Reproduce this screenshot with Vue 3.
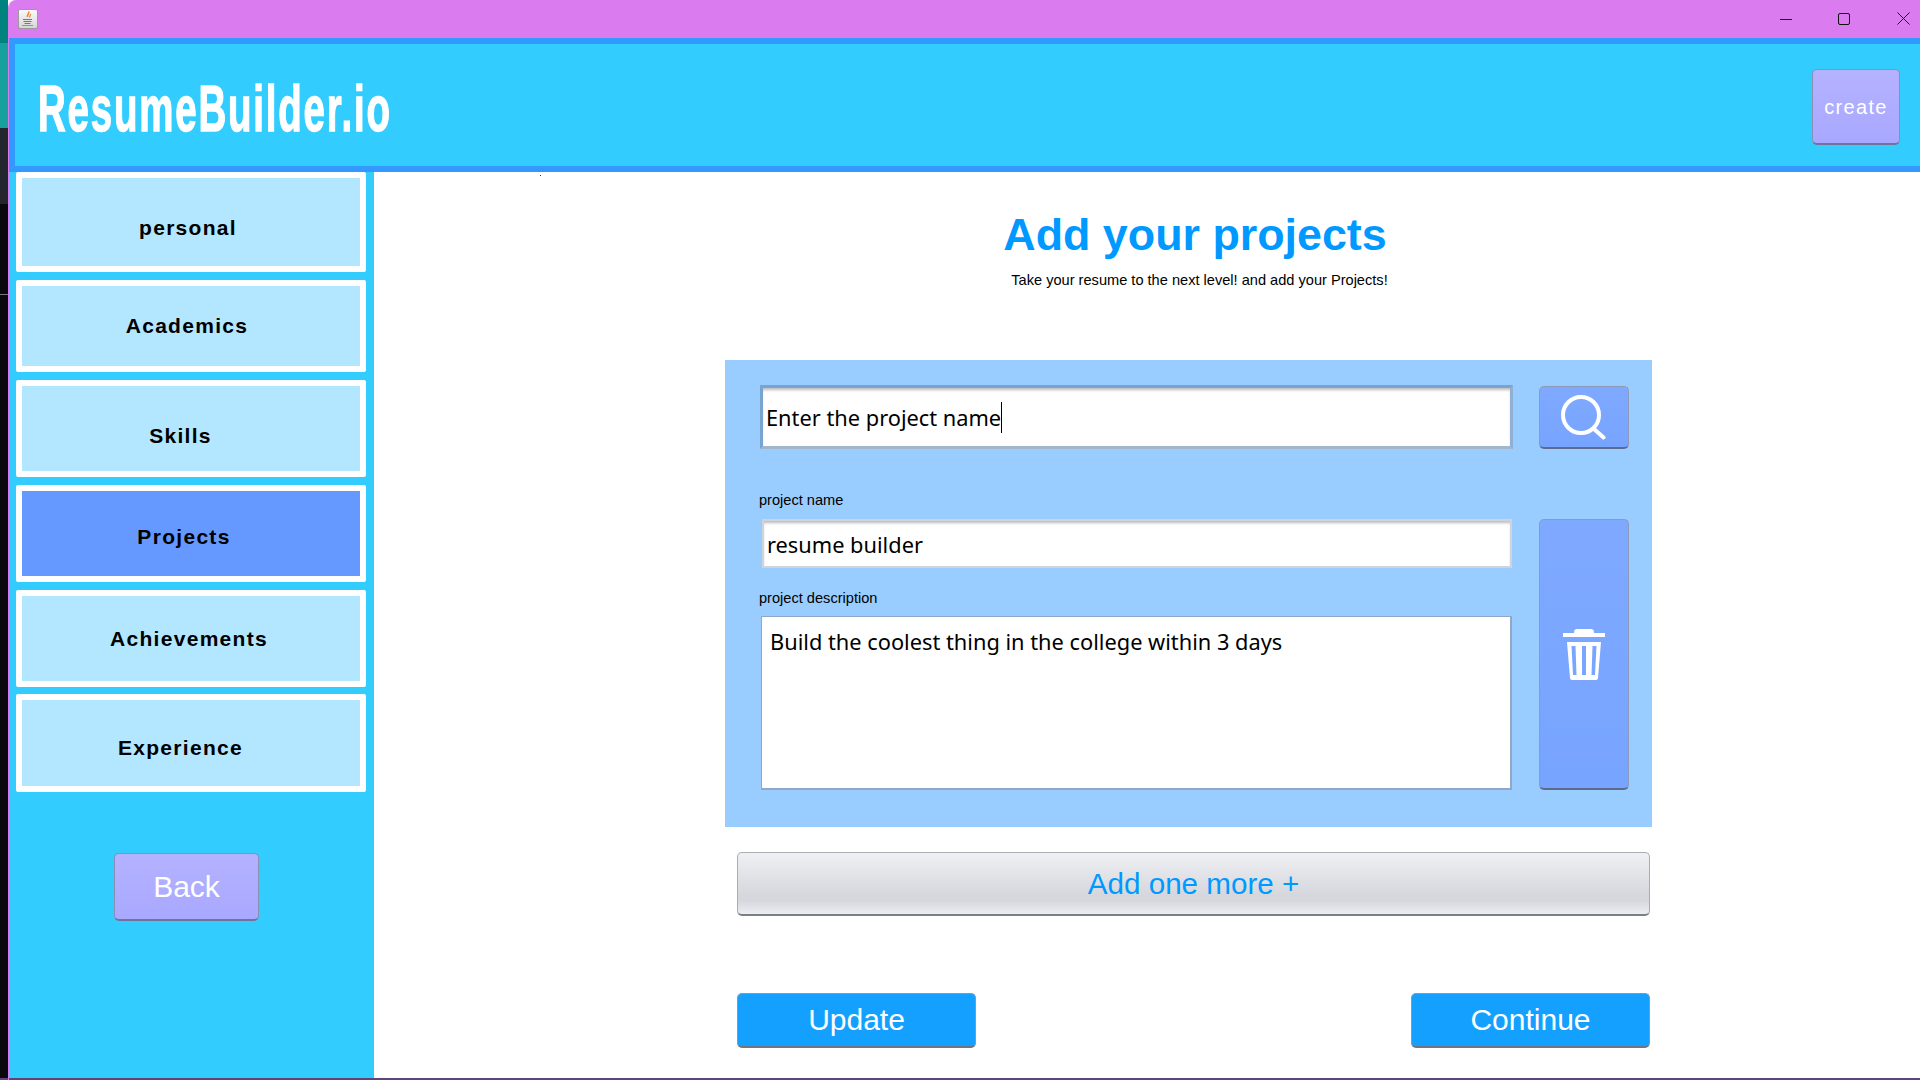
<script setup>
const navItems = [
  { label: 'personal', cls: 'n1' },
  { label: 'Academics', cls: 'n2' },
  { label: 'Skills', cls: 'n3' },
  { label: 'Projects', cls: 'n4 active' },
  { label: 'Achievements', cls: 'n5' },
  { label: 'Experience', cls: 'n6' }
]
</script>

<template>
  <div class="screen">
    <div class="desktop">
      <div class="d1"></div><div class="d2"></div><div class="d3"></div><div class="d4"></div><div class="d5"></div><div class="d6"></div><div class="d7"></div>
    </div>
    <div class="window">
      <div class="titlebar">
        <div class="appicon">
          <svg width="20" height="20" viewBox="0 0 20 20">
            <path d="M10.5 2.500c1.500 2-2 3-1 5.500" fill="none" stroke="#e8873a" stroke-width="1.6"/>
            <path d="M12.500 5c.5 1.500-1.500 2-.8 3.500" fill="none" stroke="#e8873a" stroke-width="1.2"/>
            <path d="M5 10.500h9M5.500 12.500h8M6.500 14.500h6" stroke="#5d7f9e" stroke-width="1.1" fill="none"/>
            <path d="M4 16.500h11" stroke="#7f99b3" stroke-width="1.1" fill="none"/>
          </svg>
        </div>
        <div class="winbtns">
          <svg class="w1" width="12" height="12" viewBox="0 0 12 12"><path d="M0 6.500h12" stroke="#111" fill="none"/></svg>
          <svg class="w2" width="12" height="12" viewBox="0 0 12 12"><rect x=".5" y=".5" width="11" height="11" rx="1.500" stroke="#111" fill="none"/></svg>
          <svg class="w3" width="13" height="13" viewBox="0 0 13 13"><path d="M.5.5l12 12M12.500.5l-12 12" stroke="#111" fill="none"/></svg>
        </div>
      </div>
      <header class="header">
        <div class="logo">ResumeBuilder.io</div>
        <button class="create">create</button>
      </header>
      <div class="body">
        <aside class="sidebar">
          <div v-for="n in navItems" :key="n.label" class="nav" :class="n.cls"><span>{{ n.label }}</span></div>
          <button class="back">Back</button>
        </aside>
        <main class="main">
          <i class="speck"></i>
          <h1 class="title">Add your projects</h1>
          <p class="sub">Take your resume to the next level! and add your Projects!</p>
          <section class="panel">
            <div class="left">
              <div class="field search"><span class="caretwrap">Enter the project name</span></div>
              <label class="lab l1">project name</label>
              <div class="field name">resume builder</div>
              <label class="lab l2">project description</label>
              <div class="area">Build the coolest thing in the college within 3 days</div>
            </div>
            <div class="right">
              <button class="icon sbtn">
                <svg width="46" height="46" viewBox="0 0 46 46"><circle cx="20" cy="21" r="18" fill="none" stroke="#fff" stroke-width="4"/><path d="M33 35l9.500 8.500" stroke="#fff" stroke-width="4" stroke-linecap="round" fill="none"/></svg>
              </button>
              <button class="icon dbtn">
                <svg width="42" height="51" viewBox="0 0 42 51">
                  <path d="M11 4c0-3 1-4 3-4h14c2 0 3 1 3 4z" fill="#fff"/>
                  <rect x="0" y="4" width="42" height="4" fill="#fff"/>
                  <path d="M4 13h34l-3 36c0 1-1 2-2 2H9c-1 0-2-1-2-2z" fill="#fff"/>
                  <path d="M8.500 17h4l1 29h-3.500zM19 17h4v29h-4zM29.500 17h4l-1.500 29h-3.500z" fill="#7aa6ff"/>
                </svg>
              </button>
            </div>
          </section>
          <button class="more">Add one more +</button>
          <div class="actions">
            <button class="act">Update</button>
            <button class="act">Continue</button>
          </div>
        </main>
      </div>
      <div class="bottomline"></div>
    </div>
  </div>
</template>

<style>
html, body { margin: 0; background: #fff; overflow: hidden; }
</style>

<style scoped>
* { box-sizing: border-box; }
button { font-family: "Liberation Sans", Arial, sans-serif; cursor: default; padding: 0; }
.screen { width: 1920px; height: 1080px; display: flex; overflow: hidden; font-family: "Liberation Sans", Arial, sans-serif; }
.desktop { width: 8px; display: flex; flex-direction: column; flex: none; }
.d1 { height: 43px; background: #00827f; }
.d2 { height: 85px; background: #17a09c; }
.d3 { height: 76px; background: #23252f; }
.d4 { height: 90px; background: #08080d; }
.d5 { height: 1px; background: #77777c; }
.d6 { flex: 1; background: #08080d; }
.d7 { height: 2px; background: #5e4478; }
.window { flex: 1; min-width: 0; display: flex; flex-direction: column; background: #fff; border-left: 1px solid #da7bf0; border-top-left-radius: 8px; overflow: hidden; }
.titlebar { height: 38px; flex: none; background: #da7bf0; display: flex; align-items: center; justify-content: space-between; padding-left: 9px; }
.appicon { width: 20px; height: 20px; background: linear-gradient(#fafafa, #d6d6d6); border: 1px solid #9a9a9a; border-radius: 2px; display: flex; margin-top: -1px; }
.appicon svg { margin: -1px; }
.winbtns { display: flex; align-items: center; margin-top: -1px; }
.w1 { margin-right: 46px; }
.w2 { margin-right: 47px; }
.w3 { margin-right: 10px; }
.header { height: 134px; flex: none; background: #33ccff; border: 6px solid #3399ff; border-right: none; display: flex; align-items: center; justify-content: space-between; }
.logo { color: #fff; font-family: "Liberation Sans", sans-serif; font-weight: 700; font-size: 64px; line-height: 1; letter-spacing: 3px; -webkit-text-stroke: 1.400px #fff; transform: scaleX(.601); transform-origin: left center; margin-left: 23px; margin-top: 8px; white-space: nowrap; }
.create { width: 88px; height: 76px; margin-right: 20px; margin-top: 3px; background: linear-gradient(#b5b2ff, #a8a8ff); border: 1px solid #8a8fb8; border-bottom: 2px solid #70749a; border-radius: 5px; color: #fff; font-size: 20px; letter-spacing: 1.300px; padding-top: 2px; }
.body { flex: 1; min-height: 0; display: flex; }
.sidebar { width: 365px; flex: none; background: #33ccff; padding-left: 7px; display: flex; flex-direction: column; }
.nav { width: 350px; background: #b3e6ff; border: 6px solid #fff; border-radius: 2px; display: flex; align-items: center; justify-content: center; font-weight: 700; font-size: 21px; letter-spacing: 1.300px; color: #000; }
.nav.active { background: #6699ff; }
.n1 { height: 100px; padding-right: 6px; padding-top: 12px; }
.n2 { height: 92px; margin-top: 8px; padding-right: 8px; }
.n3 { height: 97px; margin-top: 8px; padding-right: 21px; padding-top: 14px; }
.n4 { height: 97px; margin-top: 8px; padding-right: 14px; padding-top: 6px; }
.n5 { height: 97px; margin-top: 8px; padding-right: 4px; }
.n6 { height: 98px; margin-top: 7px; padding-right: 21px; padding-top: 10px; }
.back { width: 145px; height: 68px; margin: 61px 0 0 98px; background: linear-gradient(#b5b2ff, #a8a8ff); border: 1px solid #8a8fb8; border-bottom: 2px solid #70749a; border-radius: 5px; color: #fff; font-size: 30px; }
.main { flex: 1; min-width: 0; position: relative; display: flex; flex-direction: column; padding-left: 351px; }
.speck { position: absolute; left: 166px; top: 3px; width: 1px; height: 1px; background: #333; }
.title { margin: 37px 0 0; height: 50px; width: 940px; text-align: center; font-size: 44.800px; line-height: 50px; font-weight: 700; color: #0099ff; }
.sub { margin: 0; padding-top: 13px; width: 949px; text-align: center; font-size: 14.600px; line-height: 17px; color: #000; }
.panel { margin-top: 71px; width: 927px; height: 467px; background: #99ccff; display: flex; padding-left: 34px; }
.left { width: 755px; display: flex; flex-direction: column; }
.field { background: #fff; font-family: "Noto Sans", sans-serif; font-size: 21.800px; color: #000; display: flex; align-items: center; box-shadow: inset 0 3px 3px -1px #bbb; }
.search { margin-top: 25px; margin-left: 1px; width: 753px; height: 64px; border: 3px solid #8fb0d4; border-top-color: #7ba3cf; border-left-color: #7ba3cf; border-bottom-color: #a3b5ca; padding-left: 3px; }
.caretwrap { border-right: 1px solid #000; line-height: 31px; }
.lab { font-size: 14.600px; line-height: 17px; color: #000; }
.l1 { margin-top: 43px; }
.name { margin-top: 10px; margin-left: 3px; width: 750px; height: 49px; border: 2px solid #cfd4da; padding-left: 3px; padding-top: 2px; }
.l2 { margin-top: 22px; }
.area { margin-top: 9px; margin-left: 2px; width: 751px; height: 174px; background: #fff; border: 1px solid #8fa8c8; border-bottom-width: 2px; border-right-width: 2px; font-family: "Noto Sans", sans-serif; font-size: 21.800px; line-height: 30px; padding: 10px 8px; color: #000; }
.right { width: 90px; margin-left: 25px; display: flex; flex-direction: column; }
.icon { width: 90px; background: linear-gradient(#7fa9ff, #77a4ff); border: 1px solid #8e9bb8; border-bottom: 2px solid #5d6a8c; border-radius: 5px; display: flex; align-items: center; justify-content: center; }
.sbtn { height: 63px; margin-top: 26px; }
.dbtn { height: 271px; margin-top: 70px; }
.more { margin: 25px 0 0 12px; width: 913px; height: 64px; border: 1px solid #a9acb2; border-bottom: 2px solid #7c7f86; border-radius: 5px; background: linear-gradient(#eff0f3 0%, #d5d7dd 70%, #d5d7dd 78%, #eceef3 100%); color: #0099ff; font-size: 29.600px; }
.actions { margin: 77px 0 0 12px; width: 913px; display: flex; justify-content: space-between; }
.act { width: 239px; height: 55px; background: #14a0ff; border: 1px solid #8a98a8; border-bottom: 2px solid #6f7680; border-radius: 5px; color: #fff; font-size: 30px; }
.bottomline { height: 2px; flex: none; background: #5e4478; }
</style>
